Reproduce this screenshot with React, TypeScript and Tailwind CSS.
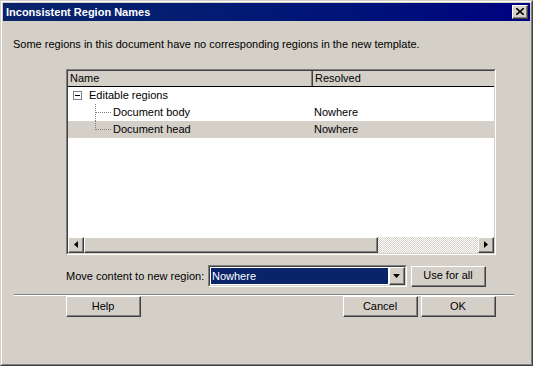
import React from 'react';

const font = "font-['Tahoma','Liberation_Sans',sans-serif]";

const Raised = ({ className = '', children }: { className?: string; children?: React.ReactNode }) => (
  <div className={`border border-t-white border-l-white border-r-[#404040] border-b-[#404040] bg-[#d4d0c8] ${className}`}>
    <div className="w-full h-full border-r border-b border-[#808080] flex items-center justify-center">
      {children}
    </div>
  </div>
);

const Sunken = ({ className = '', children }: { className?: string; children?: React.ReactNode }) => (
  <div className={`border border-t-[#808080] border-l-[#808080] border-r-white border-b-white ${className}`}>
    <div className="w-full h-full border border-t-[#404040] border-l-[#404040] border-r-[#d4d0c8] border-b-[#d4d0c8] flex flex-col">
      {children}
    </div>
  </div>
);

const Arrow = ({ dir }: { dir: 'left' | 'right' | 'down' }) => {
  if (dir === 'down')
    return (
      <svg width="7" height="4" viewBox="0 0 7 4">
        <path d="M0 0H7L3.5 4Z" fill="#000" />
      </svg>
    );
  return (
    <svg width="4" height="7" viewBox="0 0 4 7">
      <path d={dir === 'left' ? 'M4 0V7L0 3.5Z' : 'M0 0V7L4 3.5Z'} fill="#000" />
    </svg>
  );
};

const TreeLines = ({ last }: { last?: boolean }) => (
  <svg width="18" height="17" viewBox="0 0 18 17" className="shrink-0">
    <line x1="1.5" y1="0" x2="1.5" y2={last ? 9 : 17} stroke="#808080" strokeDasharray="1 1" />
    <line x1="2" y1="8.5" x2="18" y2="8.5" stroke="#808080" strokeDasharray="1 1" />
  </svg>
);

export default function App() {
  const rows = [
    { name: 'Document body', resolved: 'Nowhere', selected: false, last: false },
    { name: 'Document head', resolved: 'Nowhere', selected: true, last: true },
  ];

  return (
    <div className={`w-[533px] h-[366px] ${font} text-[11px] leading-[13px] text-black`}>
      <div className="w-full h-full border border-t-[#d4d0c8] border-l-[#d4d0c8] border-r-[#404040] border-b-[#404040]">
        <div className="w-full h-full border border-t-white border-l-white border-r-[#808080] border-b-[#808080] bg-[#d4d0c8] p-px flex flex-col">
          {/* title bar */}
          <div className="h-[18px] flex items-center bg-gradient-to-r from-[#0a246a] to-[#000080] pl-[3px] pr-[2px]">
            <span className="font-bold text-white">Inconsistent Region Names</span>
            <Raised className="ml-auto w-[16px] h-[14px]">
              <svg width="8" height="7" viewBox="0 0 8 7">
                <path d="M0 0L8 7M8 0L0 7" stroke="#000" strokeWidth="1.6" />
              </svg>
            </Raised>
          </div>

          <p className="pt-[17px] pl-[10px]">Some regions in this document have no corresponding regions in the new template.</p>

          {/* list */}
          <Sunken className="mt-[18px] ml-[63px] w-[430px] h-[186px]">
            <div className="flex h-[16px] border-b border-black">
              <div className="w-[244px] flex items-center pl-[2px] border-r border-r-[#808080]">Name</div>
              <div className="flex-1 flex items-center pl-[2px] border-l border-l-[#404040]">Resolved</div>
            </div>
            <div className="flex-1 bg-white flex flex-col">
              <div className="h-[17px] flex items-center">
                <div className="ml-[5px] w-[9px] h-[9px] border border-[#808080] bg-white flex items-center justify-center">
                  <div className="w-[5px] h-px bg-black" />
                </div>
                <span className="ml-[7px]">Editable regions</span>
              </div>
              {rows.map((r) => (
                <div key={r.name} className={`h-[17px] flex items-center ${r.selected ? 'bg-[#d4d0c8]' : ''}`}>
                  <div className="w-[244px] flex items-center pl-[26px]">
                    <TreeLines last={r.last} />
                    <span className="ml-px">{r.name}</span>
                  </div>
                  <span className="pl-[2px]">{r.resolved}</span>
                </div>
              ))}
            </div>
            {/* horizontal scrollbar */}
            <div className="h-[16px] flex">
              <Raised className="w-[16px] h-[16px]">
                <Arrow dir="left" />
              </Raised>
              <Raised className="w-[294px] h-[16px]" />
              <div className="flex-1 bg-[image:repeating-conic-gradient(#ffffff_0%_25%,#d4d0c8_0%_50%)] bg-size-[2px_2px]" />
              <Raised className="w-[16px] h-[16px]">
                <Arrow dir="right" />
              </Raised>
            </div>
          </Sunken>

          {/* combobox row */}
          <div className="mt-[10px] ml-[63px] flex items-center">
            <span className="w-[142px]">Move content to new region:</span>
            <Sunken className="w-[199px] h-[22px] bg-white">
              <div className="flex h-full">
                <div className="flex-1 p-px">
                  <div className="h-full bg-[#0a246a] text-white flex items-center pl-px">Nowhere</div>
                </div>
                <Raised className="w-[16px] h-full">
                  <Arrow dir="down" />
                </Raised>
              </div>
            </Sunken>
            <Raised className="ml-[4px] w-[75px] h-[21px]">Use for all</Raised>
          </div>

          {/* separator */}
          <div className="mt-[7px] ml-[11px] w-[500px] border-t border-t-[#808080] border-b border-b-white" />

          {/* buttons */}
          <div className="flex pl-[63px] pr-[34px] gap-[3px]">
            <Raised className="w-[75px] h-[21px]">Help</Raised>
            <Raised className="ml-auto w-[75px] h-[21px]">Cancel</Raised>
            <Raised className="w-[75px] h-[21px]">OK</Raised>
          </div>
        </div>
      </div>
    </div>
  );
}
